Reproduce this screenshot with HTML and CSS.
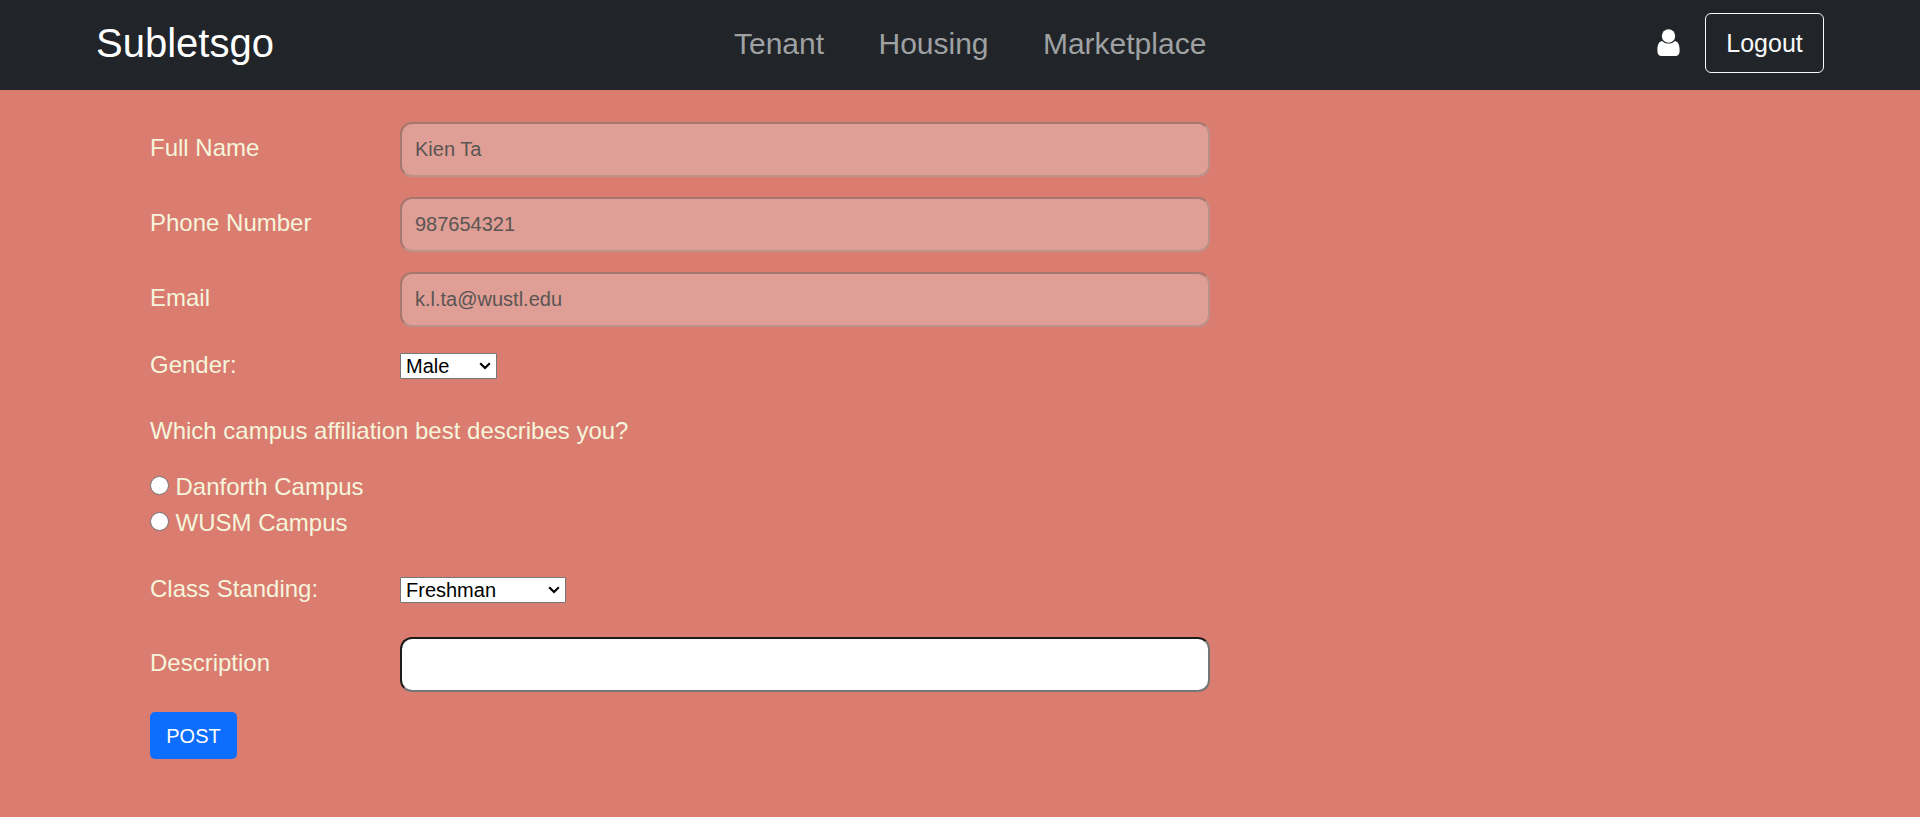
FILE: index.html
```html
<!DOCTYPE html>
<html lang="en">
<head>
<meta charset="utf-8">
<title>Subletsgo</title>
<link rel="stylesheet" href="styles.css">
</head>
<body>
<header class="navbar">
  <a class="brand">Subletsgo</a>
  <nav class="links">
    <a class="link">Tenant</a>
    <a class="link">Housing</a>
    <a class="link">Marketplace</a>
  </nav>
  <div class="account">
    <svg class="user" viewBox="0 0 23 28" aria-hidden="true">
      <path d="M5 12C1.700 12.700.4 16.200.4 20.500v1.700C.4 25 2 27 4.600 27h13.800c2.600 0 4.200-2 4.200-4.800v-1.700C22.600 16.200 21.300 12.700 18 12c-1.700 1.700-4 2.600-6.500 2.600S6.700 13.700 5 12z"/>
      <circle cx="11.500" cy="7" r="6.700"/>
    </svg>
    <button class="logout">Logout</button>
  </div>
</header>
<form class="profile">
  <div class="row field">
    <label class="label" for="name">Full Name</label>
    <input class="input" id="name" value="Kien Ta" disabled>
  </div>
  <div class="row field">
    <label class="label" for="phone">Phone Number</label>
    <input class="input" id="phone" value="987654321" disabled>
  </div>
  <div class="row field">
    <label class="label" for="email">Email</label>
    <input class="input" id="email" value="k.l.ta@wustl.edu" disabled>
  </div>
  <div class="row choice">
    <label class="label" for="gender">Gender:</label>
    <div class="select-wrap gender">
      <select class="select" id="gender"><option>Male</option></select>
      <svg class="chevron" viewBox="0 0 12 8" aria-hidden="true"><path d="M1.200 1.300 6 6.100l4.800-4.800"/></svg>
    </div>
  </div>
  <p class="question">Which campus affiliation best describes you?</p>
  <div class="radios">
    <label class="option"><input class="radio" type="radio" name="campus">Danforth Campus</label>
    <label class="option"><input class="radio" type="radio" name="campus">WUSM Campus</label>
  </div>
  <div class="row choice">
    <label class="label" for="standing">Class Standing:</label>
    <div class="select-wrap standing">
      <select class="select" id="standing"><option>Freshman</option></select>
      <svg class="chevron" viewBox="0 0 12 8" aria-hidden="true"><path d="M1.200 1.300 6 6.100l4.800-4.800"/></svg>
    </div>
  </div>
  <div class="row field">
    <label class="label" for="description">Description</label>
    <input class="input" id="description">
  </div>
  <button class="post" type="button">POST</button>
</form>
</body>
</html>
```
FILE: styles.css
```css
* { box-sizing: border-box; }
body {
  margin: 0;
  min-height: 817px;
  background: #da7c70;
  color: beige;
  font: 24px/36px "Liberation Sans", Arial, sans-serif;
}
.navbar {
  display: grid;
  grid-template-columns: 638px 1fr auto;
  height: 90px;
  padding: 0 96px;
  background: #212529;
}
.brand {
  padding-top: 13px;
  color: #fff;
  font-size: 40px;
  line-height: 60px;
}
.links {
  display: flex;
  gap: 54.4px;
  padding-top: 21px;
}
.link {
  color: #9fa1a3;
  font-size: 30px;
  line-height: 45px;
}
.account {
  display: flex;
  align-items: flex-start;
  gap: 25.5px;
  padding-top: 13px;
}
.user {
  width: 23px;
  height: 28px;
  margin-top: 15.5px;
  fill: #fff;
}
.logout {
  width: 119px;
  height: 60px;
  padding: 0;
  border: 1px solid #f8f9fa;
  border-radius: 6px;
  background: transparent;
  color: #f8f9fa;
  font: 25px/37px "Liberation Sans", Arial, sans-serif;
}
.profile { padding: 32px 150px 0; }
.row {
  display: grid;
  grid-template-columns: 250px 810px;
  align-items: start;
}
.field { margin-bottom: 20px; }
.field .label { padding-top: 8px; }
.input {
  width: 810px;
  height: 55px;
  padding: 1px 13px;
  border: 2px solid;
  border-color: #1f1b1d #767676 #767676 #1f1b1d;
  border-radius: 12px;
  background: #fff;
  color: #000;
  font: 20px "Liberation Sans", Arial, sans-serif;
}
.input:disabled {
  border-color: #a6776f #bc918a #bc918a #a6776f;
  background: #df9f96;
  color: #5a5553;
}
.choice { margin-bottom: 30px; }
.select-wrap {
  position: relative;
  height: 26px;
  margin-top: 6px;
}
.gender { width: 97px; }
.standing { width: 166px; }
.select {
  display: block;
  width: 100%;
  height: 26px;
  padding: 0 5px;
  border: 1px solid #767676;
  border-radius: 1px;
  appearance: none;
  background: #fff;
  color: #000;
  font: 20px/24px "Liberation Sans", Arial, sans-serif;
}
.chevron {
  position: absolute;
  top: 9px;
  right: 6px;
  width: 12px;
  height: 8px;
  fill: none;
  stroke: #000;
  stroke-width: 2.1;
}
.question { margin: 0 0 20px; }
.radios { margin-bottom: 30px; }
.option {
  display: flex;
  align-items: flex-start;
  gap: 6.5px;
}
.radio {
  width: 19px;
  height: 19px;
  margin: 7px 0 0;
  border: 1px solid #767676;
  border-radius: 50%;
  appearance: none;
  background: #fff;
}
.post {
  display: block;
  width: 87px;
  height: 47px;
  padding: 0;
  border: 0;
  border-radius: 5px;
  background: #0d6efd;
  color: #fff;
  font: 20px/30px "Liberation Sans", Arial, sans-serif;
}
```
